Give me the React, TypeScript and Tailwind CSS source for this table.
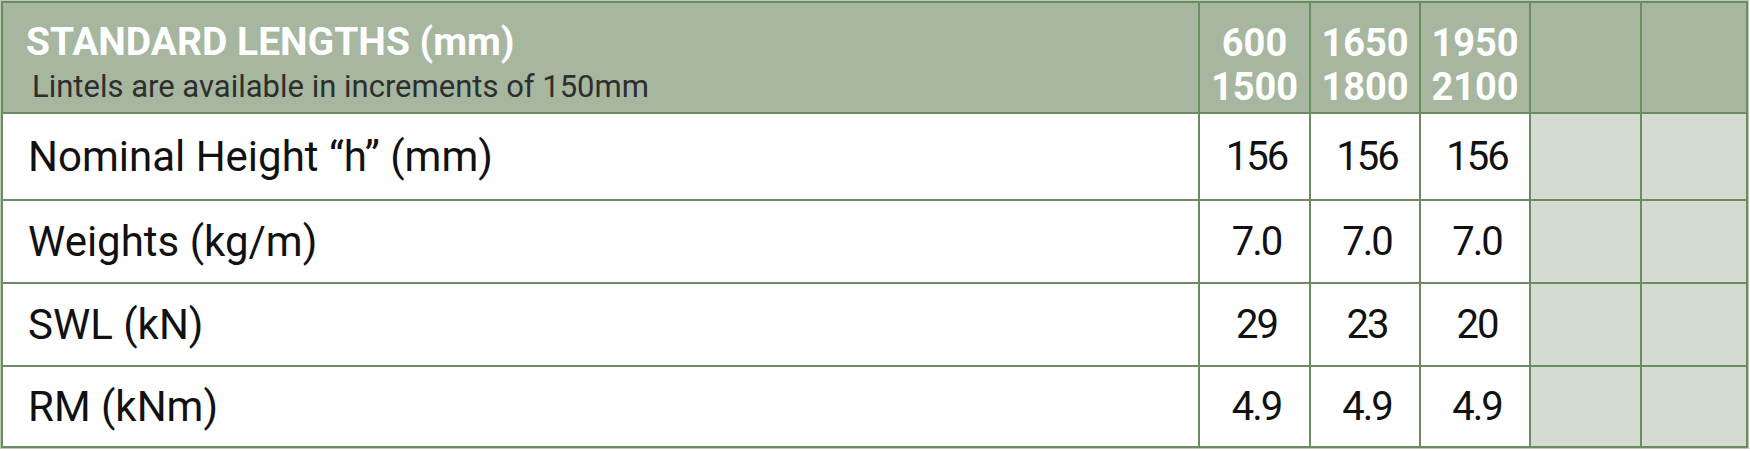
import React from "react";

const rows: { label: string; values: string[] }[] = [
  { label: "Nominal Height \u201Ch\u201D (mm)", values: ["156", "156", "156"] },
  { label: "Weights (kg/m)", values: ["7.0", "7.0", "7.0"] },
  { label: "SWL (kN)", values: ["29", "23", "20"] },
  { label: "RM (kNm)", values: ["4.9", "4.9", "4.9"] },
];

const headerNums: [string, string][] = [
  ["600", "1500"],
  ["1650", "1800"],
  ["1950", "2100"],
];

export default function App() {
  return (
    <div className="w-[1750px] h-[451px] bg-white" style={{ fontFamily: "Roboto, 'Liberation Sans', sans-serif" }}>
      <div className="w-[1749px] p-[1px] bg-[#bccab6]">
        <div className="grid grid-cols-[1195px_109px_108px_108px_109px_104px] grid-rows-[109px_85px_81px_81px_79px] gap-[2px] p-[2px] bg-[#6b8b63]">
          {/* header */}
          <div className="bg-[#a6b69f] pt-[20px] flex flex-col">
            <div className="pl-[23px] text-[39px] leading-[39px] font-bold text-white">STANDARD LENGTHS (mm)</div>
            <div className="pl-[29px] mt-[9px] text-[31px] leading-[31px] text-[#2e2e2e]">
              Lintels are available in increments of 150mm
            </div>
          </div>
          {headerNums.map(([a, b]) => (
            <div key={a} className="bg-[#a6b69f] pt-[18px] flex flex-col items-center text-white font-bold text-[38px] leading-[44px]">
              <span>{a}</span>
              <span>{b}</span>
            </div>
          ))}
          <div className="bg-[#a6b69f]" />
          <div className="bg-[#a6b69f]" />
          {/* body */}
          {rows.map((r) => (
            <React.Fragment key={r.label}>
              <div className="bg-white flex items-center pl-[25px] text-[42px] leading-[42px] text-[#111]">{r.label}</div>
              {r.values.map((v, i) => (
                <div key={i} className="bg-white flex items-center justify-center pl-[4px] text-[40px] leading-[40px] tracking-[-2px] text-[#111]">
                  {v}
                </div>
              ))}
              <div className="bg-[#d4dbd0]" />
              <div className="bg-[#d4dbd0]" />
            </React.Fragment>
          ))}
        </div>
      </div>
    </div>
  );
}
